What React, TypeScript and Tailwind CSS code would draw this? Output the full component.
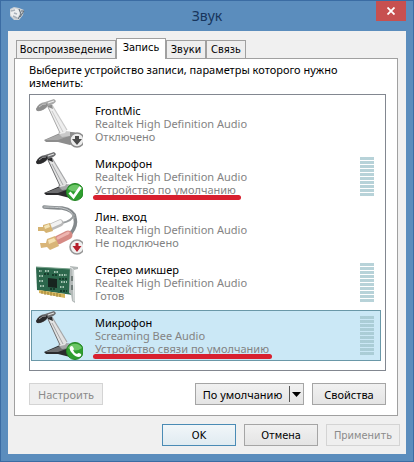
import { useState } from "react";

type Badge = "disabled" | "default" | "phone";

function Microphone({ badge }: { badge: Badge }) {
  const faded = badge === "disabled";
  const dark = faded ? "#8d8d8d" : "#2a2a2c";
  const mid = faded ? "#a9a9a9" : "#6d6e70";
  const soft = faded ? "#c9c9c9" : "#a5a6a8";
  const light = faded ? "#eeeeee" : "#e2e2e2";
  return (
    <svg viewBox="0 0 51 51" className="h-[51px] w-[51px] shrink-0" aria-hidden="true">
      <path d="M12 41 L28 34 Q40 31 46 35 L46 43 L38 46 L26 43 L14 43 Z" fill={dark} />
      <path d="M13 41 L28 35 L37 37 L26 41 Z" fill={mid} />
      <path d="M26 34 L30 31 L38 33 L38 37 L30 38 Z" fill={soft} />
      <path d="M15 7 L20 6 L35 31 L33 34 L28 35 L27 32 Z" fill={light} />
      <path d="M16 8 L28 34" stroke={mid} strokeWidth="1" />
      <path d="M20 6 L35 31" stroke={soft} strokeWidth="1.200" />
      <path d="M20 12 L31 33" stroke={soft} strokeWidth="1" />
      <path d="M14 4 L20 6 L21 10 L16 8 Z" fill={dark} />
      <path d="M4 10 Q6 4 13 3 L22 0 L24 2 Q23 5 16 7 Q11 13 5 12 Z" fill={mid} />
      <path d="M4 10 Q7 4 14 4 L16 6 Q12 12 5 12 Z" fill={dark} />
      <path d="M7 8 Q11 4 14 5" stroke={soft} strokeWidth="1" fill="none" />
      <path d="M16 4 L22 2" stroke={light} strokeWidth="1.300" />
      {badge === "disabled" && (
        <g>
          <circle cx="45" cy="41" r="7" fill="#ececec" stroke="#8b8b8b" strokeWidth="1.500" />
          <path d="M43 37h4v3h3l-5 6-5-6h3z" fill="#4b4b4b" />
        </g>
      )}
      {badge !== "disabled" && (
        <g>
          <circle cx="43" cy="40" r="8.500" fill="#2f9e2f" stroke="#238523" strokeWidth="1" />
          <path d="M36 37 A8 8 0 0 1 50 37 Q43 42 36 37Z" fill="#6cc667" />
        </g>
      )}
      {badge === "default" && (
        <path d="M37.500 40.500 L41.500 45 L48.500 35" fill="none" stroke="#fff" strokeWidth="2.800" />
      )}
      {badge === "phone" && (
        <path
          d="M38 36 q2-2 3 0 l1 2 q0 1-1 1 q1 3 4 4 q1-1 2-1 l2 1 q1 2-2 3 q-4 0-7-4 q-3-3-2-6z"
          fill="#fff"
        />
      )}
    </svg>
  );
}

function LineIn() {
  return (
    <svg viewBox="0 0 51 51" className="h-[51px] w-[51px] shrink-0" aria-hidden="true">
      <g fill="none" strokeLinecap="round">
        <path d="M12 2 Q24 3 30 3 Q42 5 43 13 Q45 21 39 28" stroke="#84898c" strokeWidth="3.500" />
        <path d="M12 2 Q24 2 30 3 Q41 5 42 13" stroke="#c8cbcd" strokeWidth="1" />
        <path d="M42 10 Q40 16 30 18" stroke="#9a9ea0" strokeWidth="2" />
        <path d="M28 18 L19 22" stroke="#b9b9b9" strokeWidth="7" />
        <path d="M28 17 L19 21" stroke="#f2f2f2" strokeWidth="4" />
        <path d="M36 30 L26 35" stroke="#d58a84" strokeWidth="9" />
        <path d="M36 28 L26 33" stroke="#edb5b0" strokeWidth="3" />
      </g>
      <path d="M11 20 L18 18 L21 26 L14 28 L12 26 L6 26 L6 22 L11 22Z" fill="#d5b372" />
      <path d="M12 21 L17 19 L18 22 L13 24Z" fill="#f4e4b7" />
      <path d="M15 34 L23 31 L27 41 L18 45 L15 42 L9 43 L8 38 L14 38Z" fill="#d9b578" />
      <path d="M16 35 L22 33 L24 36 L17 39Z" fill="#f5e1b2" />
      <circle cx="45" cy="42" r="7" fill="#f0f0f0" stroke="#979797" strokeWidth="1.500" />
      <path d="M43.500 38h3v3h3l-4.500 6-4.500-6h3z" fill="#b51f2c" />
    </svg>
  );
}

function SoundCard() {
  return (
    <svg viewBox="0 0 51 51" className="h-[51px] w-[51px] shrink-0" aria-hidden="true">
      <path d="M4 9 L39 11 L41 37 L5 32Z" fill="#2c674c" />
      <path d="M4 9 L39 11" stroke="#78a18b" />
      <path d="M7 32 L33 36 V40 L7 35Z" fill="#d7b75d" />
      <path d="M10 33v3M13 33v4M16 34v3M19 34v4M22 35v3M25 35v4M28 36v3" stroke="#896f2c" strokeWidth=".8" />
      <path d="M16 20 L25 21 V30 L16 29Z" fill="#17251f" />
      <path d="M7 13h3M13 13h5M22 14h4M7 18h4M7 23h4M8 28h4M28 29h5M27 17h8M29 24h6" stroke="#a4c4b1" strokeWidth="2" strokeDasharray="1.500 1" />
      <path d="M12 16h6M20 17h5M27 21h8M28 33h7M18 31h5" stroke="#163c2b" strokeWidth="2" strokeDasharray="2 1" />
      <path d="M38 8 L46 9 V11 L42 12 L43 45 L40 43 L39 36 L37 35Z" fill="#b3b9b8" />
      <path d="M38 9 L41 11 L42 43" fill="none" stroke="#e7ebea" strokeWidth="1" />
      <path d="M40 18v5M40 27v5" stroke="#5c6864" strokeWidth="1.500" />
    </svg>
  );
}

function Meter() {
  return (
    <div
      aria-hidden="true"
      className="mt-1 mr-[6px] ml-auto h-10 w-[14px] shrink-0 bg-[repeating-linear-gradient(to_bottom,transparent_0px,transparent_1px,#a0c4ccc0_1px,#a0c4ccc0_4px)]"
    />
  );
}

const devices = [
  { name: "FrontMic", driver: "Realtek High Definition Audio", state: "Отключено", icon: <Microphone badge="disabled" />, meter: false, mark: "" },
  { name: "Микрофон", driver: "Realtek High Definition Audio", state: "Устройство по умолчанию", icon: <Microphone badge="default" />, meter: true, mark: "w-[148px]" },
  { name: "Лин. вход", driver: "Realtek High Definition Audio", state: "Не подключено", icon: <LineIn />, meter: false, mark: "" },
  { name: "Стерео микшер", driver: "Realtek High Definition Audio", state: "Готов", icon: <SoundCard />, meter: true, mark: "" },
  { name: "Микрофон", driver: "Screaming Bee Audio", state: "Устройство связи по умолчанию", icon: <Microphone badge="phone" />, meter: true, mark: "w-[179px]" },
];

const tabs = [
  { label: "Воспроизведение", width: "w-[100px]" },
  { label: "Запись", width: "w-[50px]" },
  { label: "Звуки", width: "w-10" },
  { label: "Связь", width: "w-10" },
];

const button =
  "flex h-[22px] w-[74px] items-center justify-center border border-[#a5a5a5] bg-linear-to-b from-[#f1f1f1] to-[#e4e4e4] whitespace-nowrap text-black";
const disabledButton =
  "flex h-[22px] w-[74px] items-center justify-center border border-[#d4d4d4] bg-[#efefef] whitespace-nowrap text-[#8b8b8b]";

export default function App() {
  const [tab, setTab] = useState(1);
  const [selected, setSelected] = useState(4);

  return (
    <div className="flex min-h-screen flex-col border border-[#3b6ca3] bg-[#5b8dbd] px-[7px] pb-[7px] font-['Noto_Sans',sans-serif] text-[11px] leading-[13px] text-black">
      <header className="grid h-[30px] grid-cols-[1fr_auto_1fr] items-start">
        <svg viewBox="0 0 16 16" className="mt-[5px] ml-px size-4" aria-hidden="true">
          <path d="M1 3 L5 1 L10 2 L15 4 L14 9 L10 14 L5 14 L1 10Z" fill="#cdd1d5" />
          <circle cx="6" cy="7" r="4.500" fill="#eceef0" />
          <path d="M2 5 L6 4 M4 10 L8 12 M5 7 L8 8" stroke="#a9b1ba" strokeWidth="1.500" />
          <path d="M10 3 L12 8 L9 13 M12 5 L15 5 L11 11" stroke="#606d79" fill="none" />
        </svg>
        <h1 className="pt-[6px] text-[14px] leading-[18px] text-[#17355c]">Звук</h1>
        <button aria-label="Закрыть" className="flex h-5 w-[30px] items-center justify-center justify-self-end bg-[#c75050]">
          <svg viewBox="0 0 8 8" className="size-2" aria-hidden="true">
            <path d="M.5.5l7 7M7.500.5l-7 7" stroke="#fff" strokeWidth="1.800" />
          </svg>
        </button>
      </header>

      <main className="flex flex-1 flex-col bg-[#f0f0f0] px-[6px] pt-[7px]">
        <div role="tablist" className="flex h-5 items-end pl-[2px] font-['DejaVu_Sans_Condensed','DejaVu_Sans',sans-serif]">
          {tabs.map((item, index) => (
            <button
              key={item.label}
              role="tab"
              aria-selected={tab === index}
              onClick={() => setTab(index)}
              className={`${item.width} ${
                tab === index
                  ? "z-10 -mb-px h-[21px] border-b-0 bg-white pb-[3px]"
                  : "h-[18px] border-b-0 bg-[#eeeeee]"
              } border border-[#a0a0a0] text-center whitespace-nowrap`}
            >
              {item.label}
            </button>
          ))}
        </div>

        <section className="mr-[2px] flex flex-col border border-[#a0a0a0] bg-white px-[11px] pt-1 pb-[10px] pl-[14px]">
          <p className="max-w-[320px]">Выберите устройство записи, параметры которого нужно изменить:</p>
          <ul className="mt-[5px] flex flex-col gap-[2px] border border-[#828790] px-px pt-[3px] pb-[9px]">
            {devices.map((device, index) => (
              <li key={index} className="mr-[3px]">
                <button
                  aria-pressed={selected === index}
                  onClick={() => setSelected(index)}
                  className={`flex h-[51px] w-full items-start border text-left ${
                    selected === index ? "border-[#6a98a8] bg-[#cbe8f6]" : "border-transparent"
                  }`}
                >
                  {device.icon}
                  <span className="ml-3 flex flex-col pt-[5px] whitespace-nowrap text-[#838383]">
                    <span className="text-black">{device.name}</span>
                    <span>{device.driver}</span>
                    <span className="relative">
                      {device.state}
                      {device.mark && (
                        <span className={`absolute top-3 -left-[2px] h-[5px] rounded-full bg-[#d8202f] ${device.mark}`} />
                      )}
                    </span>
                  </span>
                  {device.meter && <Meter />}
                </button>
              </li>
            ))}
          </ul>
          <div className="mt-3 flex gap-2">
            <button disabled className={`${disabledButton} mr-auto`}>Настроить</button>
            <div className="flex h-[22px] w-[109px] items-center border border-[#a5a5a5] bg-linear-to-b from-[#f1f1f1] to-[#e4e4e4]">
              <button className="flex-1 text-center whitespace-nowrap">По умолчанию</button>
              <button aria-label="Другие варианты" className="flex h-4 w-[14px] items-center justify-center border-l border-[#555]">
                <svg viewBox="0 0 9 5" className="h-[5px] w-[9px]" aria-hidden="true">
                  <path d="M0 0h9L4.500 5z" />
                </svg>
              </button>
            </div>
            <button className={button}>Свойства</button>
          </div>
        </section>

        <footer className="mt-2 flex justify-end gap-2 pb-2 font-['DejaVu_Sans_Condensed','DejaVu_Sans',sans-serif]">
          <button className="flex h-[22px] w-[74px] items-center justify-center border border-[#4a8bb5] bg-linear-to-b from-[#f1f6f9] to-[#e0ebf1]">OK</button>
          <button className={button}>Отмена</button>
          <button disabled className={disabledButton}>Применить</button>
        </footer>
      </main>
    </div>
  );
}
